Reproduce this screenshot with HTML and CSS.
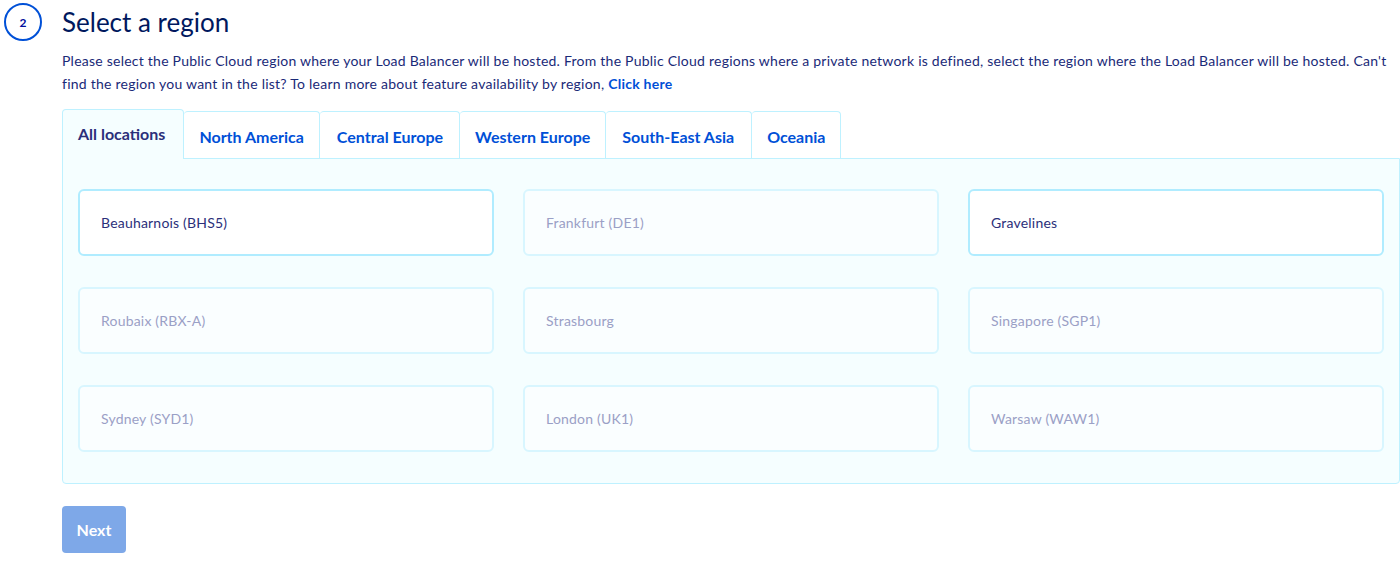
FILE: index.html
```html
<!DOCTYPE html>
<html lang="en">
<head>
<meta charset="utf-8">
<title>Select a region</title>
<link rel="stylesheet" href="styles.css">
</head>
<body>
<div class="step">
  <div class="step-badge">2</div>
  <div class="step-body">
    <h2 class="step-title">Select a region</h2>
    <p class="step-desc">Please select the Public Cloud region where your Load Balancer will be hosted. From the Public Cloud regions where a private network is defined, select the region where the Load Balancer will be hosted. Can't find the region you want in the list? To learn more about feature availability by region, <a class="link" href="#">Click here</a></p>

    <div class="tabs">
      <div class="tab active">All locations</div>
      <div class="tab">North America</div>
      <div class="tab">Central Europe</div>
      <div class="tab">Western Europe</div>
      <div class="tab wide">South-East Asia</div>
      <div class="tab">Oceania</div>
    </div>
    <div class="panel">
      <div class="card">Beauharnois (BHS5)</div>
      <div class="card disabled">Frankfurt (DE1)</div>
      <div class="card">Gravelines</div>
      <div class="card disabled">Roubaix (RBX-A)</div>
      <div class="card disabled">Strasbourg</div>
      <div class="card disabled">Singapore (SGP1)</div>
      <div class="card disabled">Sydney (SYD1)</div>
      <div class="card disabled">London (UK1)</div>
      <div class="card disabled">Warsaw (WAW1)</div>
    </div>
    <button class="btn-next" type="button">Next</button>
  </div>
</div>
</body>
</html>
```

FILE: styles.css
```css
* { box-sizing: border-box; }
html, body { margin: 0; padding: 0; background: #fff; }
body {
  font-family: "Source Sans Pro", Lato, "Liberation Sans", sans-serif;
  color: #000e9c;
}
.step {
  display: flex;
  gap: 20px;
  padding: 3px 0 0 4px;
}
.step-badge {
  flex: 0 0 38px;
  width: 38px;
  height: 38px;
  border: 2px solid #0050d7;
  border-radius: 50%;
  display: flex;
  align-items: center;
  justify-content: center;
  font-size: 12px;
  font-weight: 700;
  color: #000e9c;
}
.step-body { flex: 1; min-width: 0; }
.step-title {
  margin: 3px 0 0;
  font-size: 26px;
  line-height: 32px;
  font-weight: 400;
  color: #00185e;
}
.step-desc {
  margin: 11px 0 14px;
  font-size: 14px;
  letter-spacing: 0.24px;
  line-height: 23px;
  color: #1a2a78;
}
.link { color: #0050d7; font-weight: 700; text-decoration: none; }
.tabs {
  display: flex;
  align-items: flex-end;
  height: 49px;
}
.tab {
  height: 47px;
  padding: 2px 15px 0;
  display: flex;
  align-items: center;
  font-size: 16px;
  font-weight: 700;
  color: #0050d7;
  background: #fff;
  border: 1px solid #bef1ff;
  border-bottom: none;
  border-left: none;
  border-radius: 4px 4px 0 0;
}
.tab:nth-child(3) { padding: 2px 16px 0 17px; }
.tab.wide { padding: 2px 17px 0 16px; }
.tab.active {
  height: 50px;
  padding: 0 18px 2px 15px;
  color: #2b2f7a;
  background: #f5feff;
  border-left: 1px solid #bef1ff;
  margin-bottom: -1px;
  position: relative;
  z-index: 1;
}
.panel {
  background: #f5feff;
  border: 1px solid #bef1ff;
  border-radius: 0 0 4px 4px;
  padding: 30px 15px 31px 15px;
  display: grid;
  grid-template-columns: repeat(3, 1fr);
  column-gap: 29px;
  row-gap: 31px;
}
.card {
  height: 67px;
  display: flex;
  align-items: center;
  padding-left: 21px;
  background: #fff;
  border: 2px solid #b0ecff;
  border-radius: 6px;
  font-size: 14px;
  letter-spacing: 0.2px;
  color: #2b2f7a;
}
.card.disabled {
  background: #fafeff;
  border-color: #d8f6ff;
  color: #9aa0c6;
}
.btn-next {
  margin-top: 22px;
  width: 64px;
  height: 47px;
  border: none;
  border-radius: 4px;
  background: #7ea8e8;
  color: #fff;
  font-family: inherit;
  font-size: 16px;
  font-weight: 700;
  padding: 0;
}
```
